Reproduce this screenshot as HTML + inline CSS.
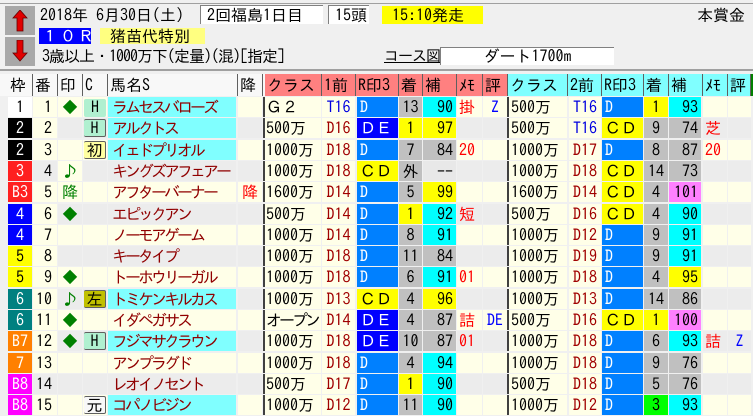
<!DOCTYPE html>
<html><head><meta charset="utf-8">
<style>
*{margin:0;padding:0;box-sizing:border-box}
body{width:753px;height:416px;overflow:hidden;background:#f0f0f0;font-family:"IPAGothic","Liberation Sans","Noto Sans CJK JP",sans-serif;font-size:16px;color:#000;position:relative}
.a{position:absolute;white-space:nowrap}
.r{position:absolute;left:0;width:753px;height:20px}
.r span{position:absolute;top:0;height:20px;line-height:20px;overflow:hidden}
.w{left:8px;width:24px;text-align:center}
.b{left:33px;width:24px;text-align:right;padding-right:5px;background:#ffffe8}
.m{left:58px;width:24px;text-align:center;color:#008000}
.c{left:83px;width:24px;text-align:center}
.n{left:108px;width:128px;padding-left:4px;color:#900000;letter-spacing:-3px}
.k{left:238px;width:24px;text-align:center;color:#f00}
.dv{left:263px;width:2px;background:#404040}
.dv2{left:507px;width:2px;background:#404040}
.l1{left:265px;width:56px;padding-left:1px}
.p1{left:322px;width:33px;text-align:center;color:#a00000}
.q1{left:357px;width:41px;padding-left:3px}
.x1{left:399px;width:23px;text-align:center}
.h1{left:423px;width:33px;text-align:right;padding-right:3px}
.y1{left:457px;width:25px;color:#f00;padding-left:2px}
.z1{left:483px;width:24px;color:#00f;text-align:center}
.l2{left:509px;width:58px;padding-left:2px}
.p2{left:569px;width:32px;text-align:center;color:#a00000}
.q2{left:602px;width:41px;padding-left:3px}
.x2{left:644px;width:24px;text-align:center}
.h2{left:669px;width:32px;text-align:right;padding-right:3px}
.y2{left:703px;width:24px;color:#f00;padding-left:2px}
.z2{left:728px;width:23px;color:#00f;text-align:center}
.cr{background:#ffffe8}.gr{background:#ececec}
.cy{background:#80ffff}.cy2{background:#00ffff}.g{background:#c0c0c0}
.D{background:#0080ff;color:#fff}.DE{background:#0000ff;color:#fff}.Y{background:#ffff00}
.M{background:#ff80ff}.G{background:#00ff00}.lg{background:#e8e8e8}
.t{color:#0000e0!important}
.hb{display:inline-block;width:22px;height:18px;line-height:17px;margin-top:1px;border:1px solid #606060;border-left:0;border-radius:2px;background:#b0f0d0;font-size:16px;font-style:normal;text-align:center}
.hd span{position:absolute;top:0;height:22px;line-height:22px;border-right:1px solid #606060;padding-left:2px}
.sal{background:#ff8080}.cyh{background:#80ffff}
</style></head><body>
<div class="a" style="left:0;top:3px;width:753px;height:1px;background:#a0a0a0"></div>
<div class="a" style="left:5px;top:6px;width:30px;height:29px;background:#a8a8a8"></div>
<div class="a" style="left:5px;top:37px;width:30px;height:29px;background:#a8a8a8"></div>
<svg class="a" style="left:12px;top:10px" width="16" height="22"><polygon points="8,0 15,8 11,8 11,21 5,21 5,8 1,8" fill="#e00000" stroke="#600" stroke-width="0.8"/></svg>
<svg class="a" style="left:12px;top:40px" width="16" height="22"><polygon points="8,21 15,13 11,13 11,0 5,0 5,13 1,13" fill="#e00000" stroke="#600" stroke-width="0.8"/></svg>
<div class="a" style="left:40px;top:5px;line-height:20px">2018年 6月30日(土)</div>
<div class="a" style="left:200px;top:5px;width:123px;height:19px;background:#fff;border-top:1px solid #808080;border-left:1px solid #808080;line-height:18px;padding-left:6px">2回福島1日目</div>
<div class="a" style="left:328px;top:5px;width:41px;height:19px;background:#fff;border-top:1px solid #808080;border-left:1px solid #808080;line-height:18px;padding-left:6px">15頭</div>
<div class="a" style="left:382px;top:6px;width:101px;height:18px;background:#ffff00;line-height:18px;padding-left:10px">15:10発走</div>
<div class="a" style="left:697px;top:5px;line-height:20px">本賞金 [</div>
<div class="a" style="left:39px;top:28px;width:52px;height:16px;background:#0000ff;color:#fff;line-height:16px;padding-left:3px;letter-spacing:2px">１０Ｒ</div>
<div class="a" style="left:100px;top:28px;width:105px;height:16px;background:#ffff80;line-height:16px;padding-left:10px">猪苗代特別</div>
<div class="a" style="left:42px;top:46px;line-height:20px;letter-spacing:-1px">3歳以上・1000万下(定量)(混)[指定]</div>
<div class="a" style="left:384px;top:47px;line-height:18px;font-size:15px;text-decoration:underline;letter-spacing:-1px">コース図</div>
<div class="a" style="left:440px;top:47px;width:174px;height:18px;background:#fff;border-top:1px solid #808080;border-left:1px solid #808080;line-height:17px;text-align:center">ダート1700m</div>
<div class="a" style="left:0;top:69px;width:753px;height:2px;background:#a0a0a0"></div>

<div class="r hd" style="top:74px;height:22px;background:#f8f8f8">
<span style="left:8px;width:25px">枠</span><span style="left:33px;width:25px">番</span><span style="left:58px;width:25px">印</span><span style="left:83px;width:25px">C</span><span style="left:108px;width:130px">馬名S</span><span style="left:238px;width:25px">降</span>
<span class="sal" style="left:265px;width:57px">クラス</span><span class="sal" style="left:322px;width:34px">1前</span><span class="sal" style="left:356px;width:43px">R印3</span><span class="sal" style="left:399px;width:24px">着</span><span class="sal" style="left:423px;width:34px">補</span><span class="sal" style="left:457px;width:26px">ﾒﾓ</span><span class="sal" style="left:483px;width:25px">評</span>
<span class="cyh" style="left:508px;width:60px">クラス</span><span class="cyh" style="left:568px;width:34px">2前</span><span class="cyh" style="left:602px;width:42px">R印3</span><span class="cyh" style="left:644px;width:25px">着</span><span class="cyh" style="left:669px;width:34px">補</span><span class="cyh" style="left:703px;width:25px">ﾒﾓ</span><span class="cyh" style="left:728px;width:23px">評</span>
<span style="left:751px;width:2px;background:#008000;border:0"></span>
</div>

<div class="r" style="top:97px">
<span class="w" style="background:#fff">1</span><span class="b">1</span><span class="m cr">◆</span><span class="c cr"><i class="hb" style="border:0">H</i></span><span class="n cy">ラムセスバローズ</span><span class="k cr"></span><span class="dv"></span>
<span class="l1 cr">Ｇ２</span><span class="p1 cr t">T16</span><span class="q1 D">D</span><span class="x1 g">13</span><span class="h1 cy2">90</span><span class="y1 cr">掛</span><span class="z1 cr">Z</span><span class="dv2"></span>
<span class="l2 cr">500万</span><span class="p2 cr t">T16</span><span class="q2 D">D</span><span class="x2 Y">1</span><span class="h2 cy2">93</span><span class="y2 cr"></span><span class="z2 cr"></span></div>
<div class="r" style="top:118.3px">
<span class="w" style="background:#000;color:#fff">2</span><span class="b">2</span><span class="m gr"></span><span class="c gr"><i class="hb">H</i></span><span class="n cy">アルクトス</span><span class="k gr"></span><span class="dv"></span>
<span class="l1 cr">500万</span><span class="p1 cr">D16</span><span class="q1 DE">ＤＥ</span><span class="x1 Y">1</span><span class="h1 Y">97</span><span class="y1 gr"></span><span class="z1 gr"></span><span class="dv2"></span>
<span class="l2 cr">500万</span><span class="p2 cr t">T16</span><span class="q2 Y">ＣＤ</span><span class="x2 g">9</span><span class="h2 g">74</span><span class="y2 gr">芝</span><span class="z2 gr"></span></div>
<div class="r" style="top:139.6px">
<span class="w" style="background:#000;color:#fff">2</span><span class="b">3</span><span class="m cr"></span><span class="c cr"><i class="hb" style="background:#ffffa0">初</i></span><span class="n cy">イェドプリオル</span><span class="k cr"></span><span class="dv"></span>
<span class="l1 cr">1000万</span><span class="p1 cr">D18</span><span class="q1 D">D</span><span class="x1 g">7</span><span class="h1 g">84</span><span class="y1 cr">20</span><span class="z1 cr"></span><span class="dv2"></span>
<span class="l2 cr">1000万</span><span class="p2 cr">D17</span><span class="q2 D">D</span><span class="x2 g">8</span><span class="h2 g">87</span><span class="y2 cr">20</span><span class="z2 cr"></span></div>
<div class="r" style="top:160.9px">
<span class="w" style="background:#ff2020;color:#fff">3</span><span class="b gr">4</span><span class="m cr">♪</span><span class="c gr"></span><span class="n gr">キングズアフェアー</span><span class="k gr"></span><span class="dv"></span>
<span class="l1 cr">1000万</span><span class="p1 cr">D18</span><span class="q1 Y">ＣＤ</span><span class="x1 g">外</span><span class="h1 lg">--</span><span class="y1 gr"></span><span class="z1 gr"></span><span class="dv2"></span>
<span class="l2 cr">1000万</span><span class="p2 cr">D18</span><span class="q2 Y">ＣＤ</span><span class="x2 g">14</span><span class="h2 g">73</span><span class="y2 gr"></span><span class="z2 gr"></span></div>
<div class="r" style="top:182.2px">
<span class="w" style="background:#ff2020;color:#fff">B3</span><span class="b">5</span><span class="m cr">降</span><span class="c cr"></span><span class="n cr">アフターバーナー</span><span class="k cr">降</span><span class="dv"></span>
<span class="l1 cr">1600万</span><span class="p1 cr">D14</span><span class="q1 D">D</span><span class="x1 g">5</span><span class="h1 Y">99</span><span class="y1 cr"></span><span class="z1 cr"></span><span class="dv2"></span>
<span class="l2 cr">1600万</span><span class="p2 cr">D14</span><span class="q2 Y">ＣＤ</span><span class="x2 g">4</span><span class="h2 M">101</span><span class="y2 cr"></span><span class="z2 cr"></span></div>
<div class="r" style="top:203.5px">
<span class="w" style="background:#0000ff;color:#fff">4</span><span class="b">6</span><span class="m gr">◆</span><span class="c gr"></span><span class="n gr">エピックアン</span><span class="k gr"></span><span class="dv"></span>
<span class="l1 cr">500万</span><span class="p1 cr">D14</span><span class="q1 D">D</span><span class="x1 Y">1</span><span class="h1 cy2">92</span><span class="y1 gr">短</span><span class="z1 gr"></span><span class="dv2"></span>
<span class="l2 cr">500万</span><span class="p2 cr">D16</span><span class="q2 Y">ＣＤ</span><span class="x2 g">4</span><span class="h2 cy2">90</span><span class="y2 gr"></span><span class="z2 gr"></span></div>
<div class="r" style="top:224.8px">
<span class="w" style="background:#0000ff;color:#fff">4</span><span class="b">7</span><span class="m cr"></span><span class="c cr"></span><span class="n cr">ノーモアゲーム</span><span class="k cr"></span><span class="dv"></span>
<span class="l1 cr">1000万</span><span class="p1 cr">D14</span><span class="q1 D">D</span><span class="x1 g">8</span><span class="h1 cy2">91</span><span class="y1 cr"></span><span class="z1 cr"></span><span class="dv2"></span>
<span class="l2 cr">1000万</span><span class="p2 cr">D12</span><span class="q2 D">D</span><span class="x2 g">9</span><span class="h2 cy2">91</span><span class="y2 cr"></span><span class="z2 cr"></span></div>
<div class="r" style="top:246.1px">
<span class="w" style="background:#ffff00">5</span><span class="b">8</span><span class="m gr"></span><span class="c gr"></span><span class="n gr">キータイプ</span><span class="k gr"></span><span class="dv"></span>
<span class="l1 cr">1000万</span><span class="p1 cr">D18</span><span class="q1 D">D</span><span class="x1 g">11</span><span class="h1 g">84</span><span class="y1 gr"></span><span class="z1 gr"></span><span class="dv2"></span>
<span class="l2 cr">1000万</span><span class="p2 cr">D19</span><span class="q2 D">D</span><span class="x2 g">9</span><span class="h2 cy2">91</span><span class="y2 gr"></span><span class="z2 gr"></span></div>
<div class="r" style="top:267.4px">
<span class="w" style="background:#ffff00">5</span><span class="b">9</span><span class="m cr">◆</span><span class="c cr"></span><span class="n cr">トーホウリーガル</span><span class="k cr"></span><span class="dv"></span>
<span class="l1 cr">1000万</span><span class="p1 cr">D18</span><span class="q1 D">D</span><span class="x1 g">6</span><span class="h1 cy2">91</span><span class="y1 cr">01</span><span class="z1 cr"></span><span class="dv2"></span>
<span class="l2 cr">1000万</span><span class="p2 cr">D18</span><span class="q2 D">D</span><span class="x2 g">4</span><span class="h2 Y">95</span><span class="y2 cr"></span><span class="z2 cr"></span></div>
<div class="r" style="top:288.7px">
<span class="w" style="background:#008080;color:#fff">6</span><span class="b">10</span><span class="m gr">♪</span><span class="c gr"><i class="hb" style="background:#c0c000">左</i></span><span class="n cy">トミケンキルカス</span><span class="k gr"></span><span class="dv"></span>
<span class="l1 cr">1000万</span><span class="p1 cr">D13</span><span class="q1 Y">ＣＤ</span><span class="x1 g">4</span><span class="h1 Y">96</span><span class="y1 gr"></span><span class="z1 gr"></span><span class="dv2"></span>
<span class="l2 cr">1000万</span><span class="p2 cr">D13</span><span class="q2 D">D</span><span class="x2 g">14</span><span class="h2 g">86</span><span class="y2 gr"></span><span class="z2 gr"></span></div>
<div class="r" style="top:310px">
<span class="w" style="background:#008080;color:#fff">6</span><span class="b">11</span><span class="m cr">◆</span><span class="c cr"></span><span class="n cr">イダペガサス</span><span class="k cr"></span><span class="dv"></span>
<span class="l1 cr" style="letter-spacing:-3px">オープン</span><span class="p1 cr">D14</span><span class="q1 DE">ＤＥ</span><span class="x1 g">4</span><span class="h1 g">87</span><span class="y1 cr">詰</span><span class="z1 cr">DE</span><span class="dv2"></span>
<span class="l2 cr">500万</span><span class="p2 cr">D16</span><span class="q2 Y">ＣＤ</span><span class="x2 Y">1</span><span class="h2 M">100</span><span class="y2 cr"></span><span class="z2 cr"></span></div>
<div class="r" style="top:331.3px">
<span class="w" style="background:#ff8000;color:#fff">B7</span><span class="b">12</span><span class="m gr">◆</span><span class="c gr"><i class="hb">H</i></span><span class="n cy">フジマサクラウン</span><span class="k gr"></span><span class="dv"></span>
<span class="l1 cr">1000万</span><span class="p1 cr">D18</span><span class="q1 DE">ＤＥ</span><span class="x1 g">10</span><span class="h1 g">87</span><span class="y1 gr">01</span><span class="z1 gr"></span><span class="dv2"></span>
<span class="l2 cr">1000万</span><span class="p2 cr">D18</span><span class="q2 D">D</span><span class="x2 g">6</span><span class="h2 cy2">93</span><span class="y2 gr">詰</span><span class="z2 gr">Z</span></div>
<div class="r" style="top:352.6px">
<span class="w" style="background:#ff8000;color:#fff">7</span><span class="b">13</span><span class="m cr"></span><span class="c cr"></span><span class="n cr">アンプラグド</span><span class="k cr"></span><span class="dv"></span>
<span class="l1 cr">1000万</span><span class="p1 cr">D18</span><span class="q1 D">D</span><span class="x1 g">4</span><span class="h1 cy2">94</span><span class="y1 cr"></span><span class="z1 cr"></span><span class="dv2"></span>
<span class="l2 cr">1000万</span><span class="p2 cr">D18</span><span class="q2 D">D</span><span class="x2 g">9</span><span class="h2 g">76</span><span class="y2 cr"></span><span class="z2 cr"></span></div>
<div class="r" style="top:373.9px">
<span class="w" style="background:#ff00ff;color:#fff">B8</span><span class="b gr">14</span><span class="m gr"></span><span class="c gr"></span><span class="n gr">レオイノセント</span><span class="k gr"></span><span class="dv"></span>
<span class="l1 cr">500万</span><span class="p1 cr">D17</span><span class="q1 D">D</span><span class="x1 Y">1</span><span class="h1 cy2">90</span><span class="y1 gr"></span><span class="z1 gr"></span><span class="dv2"></span>
<span class="l2 cr">500万</span><span class="p2 cr">D18</span><span class="q2 D">D</span><span class="x2 g">5</span><span class="h2 g">76</span><span class="y2 gr"></span><span class="z2 gr"></span></div>
<div class="r" style="top:395.2px">
<span class="w" style="background:#ff00ff;color:#fff">B8</span><span class="b">15</span><span class="m cr"></span><span class="c cr"><i class="hb" style="background:#f8f8f8">元</i></span><span class="n cy">コパノビジン</span><span class="k cr"></span><span class="dv"></span>
<span class="l1 cr">1000万</span><span class="p1 cr">D12</span><span class="q1 D">D</span><span class="x1 g">11</span><span class="h1 cy2">90</span><span class="y1 cr"></span><span class="z1 cr"></span><span class="dv2"></span>
<span class="l2 cr">1000万</span><span class="p2 cr">D12</span><span class="q2 D">D</span><span class="x2 G">3</span><span class="h2 cy2">93</span><span class="y2 cr"></span><span class="z2 cr"></span></div>
</body></html>
